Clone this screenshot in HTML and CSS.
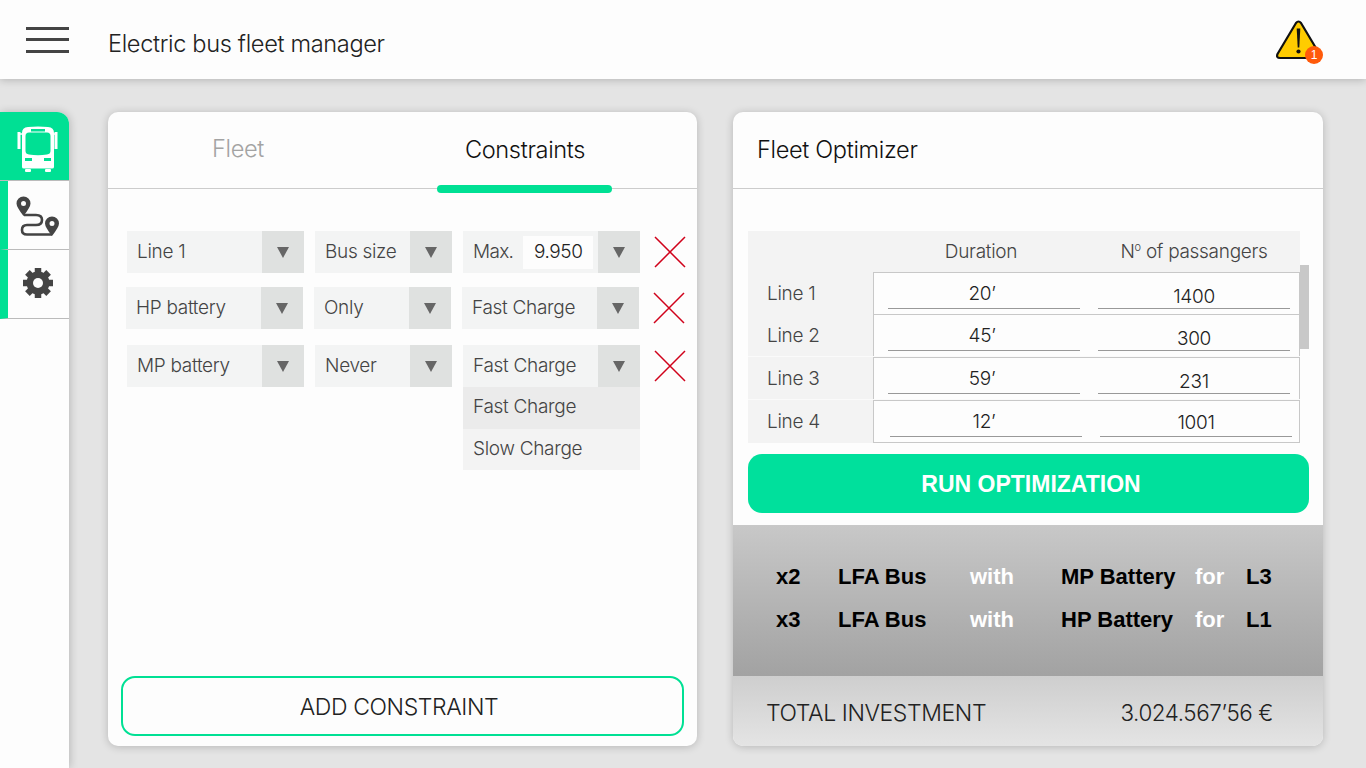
FILE: index.html
```html
<!DOCTYPE html>
<html lang="en">
<head>
<meta charset="utf-8">
<title>Electric bus fleet manager</title>
<link rel="stylesheet" href="styles.css">
</head>
<body>
<header class="topbar">
  <button class="burger" aria-label="Menu"><span></span><span></span><span></span></button>
  <h1 class="app-title">Electric bus fleet manager</h1>
  <div class="alert">
    <svg class="alert-icon" width="46" height="40" viewBox="0 0 46 40">
      <path d="M20 3 Q22.500 0 25 3 L43.500 34 Q45 38 41 38 H4 Q0 38 1.500 34 Z" fill="#ffcc00" stroke="#111" stroke-width="2.200" stroke-linejoin="round"/>
      <path d="M20.700 8.500 h3.600 l-1 19 h-1.600 Z" fill="#111"/>
      <circle cx="22.500" cy="31.500" r="2.100" fill="#111"/>
    </svg>
    <span class="alert-badge">1</span>
  </div>
</header>

<main class="main">
  <nav class="sidebar">
    <a class="side-item side-active">
      <svg width="42" height="46" viewBox="0 0 42 46">
        <rect x="0.500" y="6" width="3" height="17" fill="#fff"/>
        <rect x="37.500" y="6" width="3" height="17" fill="#fff"/>
        <path d="M3 8 H6 M35 8 H38" stroke="#fff" stroke-width="1.400"/>
        <path d="M5 7 Q5 1.500 11 1 Q21 0 31 1 Q37 1.500 37 7 V41 Q37 42.500 35 42.500 H7 Q5 42.500 5 41 Z" fill="#fff"/>
        <rect x="8" y="43" width="6" height="3" rx="1" fill="#fff"/>
        <rect x="28" y="43" width="6" height="3" rx="1" fill="#fff"/>
        <rect x="14" y="3" width="14" height="2.500" fill="#00e094"/>
        <path d="M8.500 10 Q8.500 6.500 12 6.500 H30 Q33.500 6.500 33.500 10 V25 Q33.500 28 30 28.500 Q21 30 12 28.500 Q8.500 28 8.500 25 Z" fill="#00e094"/>
        <rect x="8" y="32" width="7" height="3" fill="#00e094"/>
        <rect x="27" y="32" width="7" height="3" fill="#00e094"/>
      </svg>
    </a>
    <a class="side-item">
      <svg width="44" height="42" viewBox="0 0 44 42">
        <path d="M8 19 H20 Q26 19 26 24 Q26 29 20 29 H11 Q6 29 6 34 Q6 38.500 11 38.500 H36" fill="none" stroke="#444" stroke-width="2.600"/>
        <path fill-rule="evenodd" d="M7.500 0.500 A7 7 0 0 1 14.500 7.500 Q14.500 11 7.500 20 Q0.500 11 0.500 7.500 A7 7 0 0 1 7.500 0.500 Z M7.500 5 A2.500 2.500 0 1 0 7.500 10 A2.500 2.500 0 1 0 7.500 5 Z" fill="#444"/>
        <path fill-rule="evenodd" d="M36 20.500 A7 7 0 0 1 43 27.500 Q43 31 36 40 Q29 31 29 27.500 A7 7 0 0 1 36 20.500 Z M36 25 A2.500 2.500 0 1 0 36 30 A2.500 2.500 0 1 0 36 25 Z" fill="#444"/>
      </svg>
    </a>
    <a class="side-item">
      <svg width="32" height="32" viewBox="0 0 32 32">
        <g stroke="#444" stroke-width="6.500">
          <path d="M16 1 V31"/><path d="M1 16 H31"/><path d="M5.400 5.400 L26.600 26.600"/><path d="M26.600 5.400 L5.400 26.600"/>
        </g>
        <circle cx="16" cy="16" r="11.500" fill="#444"/>
        <circle cx="16" cy="16" r="5" fill="#fdfdfd"/>
      </svg>
    </a>
  </nav>

  <section class="card card-left">
    <div class="tabs">
      <div class="tab tab-fleet">Fleet</div>
      <div class="tab tab-constraints">Constraints</div>
    </div>
    <div class="constraints">
      <div class="row">
        <div class="select w-lg"><span class="select-text">Line 1</span><span class="arrow"></span></div>
        <div class="select w-sm"><span class="select-text">Bus size</span><span class="arrow"></span></div>
        <div class="select w-lg"><span class="select-text select-max">Max.</span><span class="max-value">9.950</span><span class="arrow"></span></div>
        <svg class="remove" width="32" height="32" viewBox="0 0 32 32"><path d="M1 1 L31 31 M31 1 L1 31" stroke="#d0021b" stroke-width="1.500"/></svg>
      </div>
      <div class="row row-second">
        <div class="select w-lg"><span class="select-text">HP battery</span><span class="arrow"></span></div>
        <div class="select w-sm"><span class="select-text">Only</span><span class="arrow"></span></div>
        <div class="select w-lg"><span class="select-text">Fast Charge</span><span class="arrow"></span></div>
        <svg class="remove" width="32" height="32" viewBox="0 0 32 32"><path d="M1 1 L31 31 M31 1 L1 31" stroke="#d0021b" stroke-width="1.500"/></svg>
      </div>
      <div class="row row-third">
        <div class="select w-lg"><span class="select-text">MP battery</span><span class="arrow"></span></div>
        <div class="select w-sm"><span class="select-text">Never</span><span class="arrow"></span></div>
        <div class="select w-lg select-open"><span class="select-text">Fast Charge</span><span class="arrow"></span>
          <ul class="menu">
            <li class="menu-item menu-item-hover">Fast Charge</li>
            <li class="menu-item">Slow Charge</li>
          </ul>
        </div>
        <svg class="remove" width="32" height="32" viewBox="0 0 32 32"><path d="M1 1 L31 31 M31 1 L1 31" stroke="#d0021b" stroke-width="1.500"/></svg>
      </div>
    </div>
    <button class="add-btn">ADD CONSTRAINT</button>
  </section>

  <section class="card card-right">
    <div class="card-head">Fleet Optimizer</div>
    <div class="table">
      <div class="t-head"><span class="col-a">Duration</span><span class="col-b">N<sup>o</sup> of passangers</span></div>
      <div class="t-row"><span class="t-label">Line 1</span><div class="t-cells"><span class="val val-dur">20’</span><span class="val">1400</span></div></div>
      <div class="t-row"><span class="t-label">Line 2</span><div class="t-cells"><span class="val val-dur">45’</span><span class="val">300</span></div></div>
      <div class="t-row t-row-sep"><span class="t-label">Line 3</span><div class="t-cells"><span class="val val-dur">59’</span><span class="val">231</span></div></div>
      <div class="t-row t-row-sep t-row-last"><span class="t-label">Line 4</span><div class="t-cells"><span class="val val-dur">12’</span><span class="val">1001</span></div></div>
      <div class="scrollbar"></div>
    </div>
    <button class="run-btn">RUN OPTIMIZATION</button>
    <div class="results">
      <b>x2</b><b>LFA Bus</b><i>with</i><b>MP Battery</b><i>for</i><b>L3</b>
      <b>x3</b><b>LFA Bus</b><i>with</i><b>HP Battery</b><i>for</i><b>L1</b>
    </div>
    <div class="total"><span>TOTAL INVESTMENT</span><span class="total-value">3.024.567’56 €</span></div>
  </section>
</main>
</body>
</html>
```
FILE: styles.css
```css
* { box-sizing: border-box; }
html, body { margin: 0; height: 100%; }
body {
  width: 1366px;
  height: 768px;
  overflow: hidden;
  background: #e4e4e4;
  color: #333;
  font-family: Inter, "Liberation Sans", sans-serif;
  font-weight: 300;
  display: flex;
  flex-direction: column;
}

.topbar {
  height: 79px;
  flex: none;
  background: #fdfdfd;
  box-shadow: 0 1px 8px rgba(0,0,0,.22);
  display: flex;
  align-items: center;
  position: relative;
  z-index: 2;
}
.burger {
  margin-left: 26px;
  width: 43px;
  height: 26px;
  padding: 0;
  border: 0;
  background: none;
  display: flex;
  flex-direction: column;
  justify-content: space-between;
}
.burger span { display: block; height: 3px; background: #444; }
.app-title {
  margin: 8px 0 0 39px;
  font-size: 23.6px;
  font-weight: 300;
  letter-spacing: -0.35px;
  color: #222;
  flex: 1;
}
.alert { position: relative; width: 46px; height: 40px; margin-right: 44px; margin-top: 1px; }
.alert-icon { display: block; }
.alert-badge {
  position: absolute;
  left: 29px;
  top: 26px;
  width: 18px;
  height: 18px;
  border-radius: 50%;
  background: #ff5a0a;
  color: #fff;
  font: 12px/18px "Liberation Sans", sans-serif;
  text-align: center;
}

.main {
  flex: 1;
  display: flex;
  padding-top: 33px;
  min-height: 0;
}
.sidebar {
  width: 69px;
  flex: none;
  margin-right: 39px;
  background: #fdfdfd;
  border-top-right-radius: 12px;
  box-shadow: 1px 0 8px rgba(0,0,0,.2);
}
.side-item {
  display: flex;
  align-items: center;
  justify-content: center;
  height: 69px;
  background: #fdfdfd;
  border-left: 8px solid #00e094;
  border-bottom: 1px solid #bbb;
}
.side-active {
  background: #00e094;
  border-left: 0;
  border-top-right-radius: 12px;
  height: 69px;
}
.side-item svg { display: block; }
.side-item:nth-child(1) svg { margin-left: 6px; margin-top: 6px; }
.side-item:nth-child(2) svg { margin-left: -1px; margin-top: 3px; }
.side-item:nth-child(3) svg { margin-left: -2px; margin-top: -2px; }

.card {
  background: #fdfdfd;
  border-radius: 10px;
  height: 634px;
  box-shadow: 0 1px 8px rgba(0,0,0,.2);
  display: flex;
  flex-direction: column;
}
.card-left { width: 589px; margin-right: 36px; }
.card-right { width: 590px; overflow: hidden; }

.tabs {
  height: 77px;
  flex: none;
  display: grid;
  grid-template-columns: 260px 314px;
  border-bottom: 1px solid #ccc;
  font-size: 23.6px;
  letter-spacing: -0.35px;
}
.tab { text-align: center; padding-top: 23px; position: relative; }
.tab-fleet { color: #a3a3a3; padding-top: 22px; }
.tab-constraints { color: #111; font-weight: 300; }
.tab-constraints::after {
  content: "";
  position: absolute;
  left: 69px;
  top: 73px;
  width: 175px;
  height: 8px;
  border-radius: 4px;
  background: #00e094;
}

.constraints { padding: 42px 0 0 19px; flex: 1; font-size: 19px; }
.row { display: flex; align-items: flex-start; gap: 11px; }
.row-second { margin: 14px 0 0 -1px; }
.row-third { margin-top: 16px; }
.select {
  height: 42px;
  background: #f3f4f4;
  display: flex;
  align-items: center;
  position: relative;
  color: #444;
}
.w-lg { width: 177px; }
.w-sm { width: 137px; }
.select-text { flex: 1; padding: 0 0 2px 10px; letter-spacing: -0.3px; white-space: nowrap; }
.select-max { flex: none; letter-spacing: -0.7px; }
.max-value {
  width: 70px;
  height: 33px;
  margin-left: 10px;
  background: #fdfdfd;
  color: #222;
  text-align: center;
  line-height: 31px;
  letter-spacing: -0.4px;
}
.arrow {
  margin-left: auto;
  width: 42px;
  height: 42px;
  flex: none;
  background: #dfe1e0;
  position: relative;
}
.select-text + .arrow { margin-left: 0; }
.arrow::after {
  content: "";
  position: absolute;
  left: 15px;
  top: 16px;
  border-left: 6px solid transparent;
  border-right: 6px solid transparent;
  border-top: 11px solid #666;
}
.remove { margin: 5px 0 0 3px; flex: none; }
.menu {
  position: absolute;
  left: 0;
  top: 42px;
  width: 177px;
  margin: 0;
  padding: 0;
  list-style: none;
}
.menu-item { height: 41px; line-height: 40px; padding-left: 10px; background: #f3f3f3; letter-spacing: -0.3px; }
.menu-item-hover { background: #ebebeb; height: 42px; }

.add-btn {
  height: 60px;
  margin: 0 13px 10px;
  flex: none;
  padding: 2px 7px 0 0;
  background: transparent;
  border: 2px solid #00e094;
  border-radius: 14px;
  font: inherit;
  font-size: 23px;
  letter-spacing: -0.4px;
  color: #222;
}

.card-head {
  height: 77px;
  flex: none;
  padding: 23px 0 0 24px;
  border-bottom: 1px solid #ccc;
  font-size: 23.6px;
  letter-spacing: -0.35px;
  color: #111;
}
.table {
  margin: 42px 0 0 15px;
  width: 552px;
  position: relative;
  background: #f3f3f3;
  font-size: 19px;
  color: #444;
}
.t-head {
  height: 41px;
  display: flex;
  align-items: center;
  letter-spacing: -0.3px;
}
.col-a { width: 140px; margin-left: 163px; text-align: center; }
.col-b { width: 212px; margin-left: 37px; text-align: center; }
.col-b sup { font-size: 11px; line-height: 0; }
.t-row { height: 42px; display: flex; }
.t-row-sep { height: 43px; border-top: 1px solid #fafafa; }
.t-row-last { height: 44px; }
.t-label { width: 125px; padding: 10px 0 0 19px; letter-spacing: -0.3px; }
.t-cells {
  flex: 1;
  display: flex;
  gap: 18px;
  padding: 0 9px 5px 14px;
  background: #fdfdfd;
  border: 1px solid #c8c8c8;
  border-bottom: 0;
}
.t-row-last .t-cells { padding: 0 7px 5px 16px; border-bottom: 1px solid #c8c8c8; }
.val {
  width: 192px;
  border-bottom: 1px solid #999;
  text-align: center;
  color: #222;
  letter-spacing: -0.3px;
  align-self: stretch;
  padding-top: 12px;
  line-height: 24px;
}
.val-dur { padding: 9px 4px 0 0; }
.t-row-last .val { padding-top: 10px; }
.t-row-last .val-dur { padding-top: 9px; }
.scrollbar {
  position: absolute;
  left: 552px;
  top: 34px;
  width: 9px;
  height: 84px;
  background: #c8c8c8;
}

.run-btn {
  height: 59px;
  margin: 11px 14px 12px 15px;
  flex: none;
  padding: 1px 0 0 5px;
  border: 0;
  border-radius: 14px;
  background: #00e09c;
  color: #fff;
  font: bold 23px "Liberation Sans", sans-serif;
}
.results {
  height: 151px;
  flex: none;
  background: linear-gradient(#c8c8c8, #a2a2a2);
  display: grid;
  grid-template-columns: 62px 132px 91px 134px 51px auto;
  grid-auto-rows: 43px;
  align-items: center;
  align-content: start;
  padding: 30px 0 0 43px;
  font: bold 22px "Liberation Sans", sans-serif;
  color: #000;
}
.results i { font-style: normal; color: #fff; }
.total {
  height: 70px;
  flex: none;
  background: linear-gradient(#cecece, #e4e4e4);
  display: flex;
  justify-content: space-between;
  align-items: center;
  padding: 3px 50px 0 33px;
  font-size: 23px;
  letter-spacing: -0.4px;
  color: #222;
}
.total-value { font-size: 22.4px; }
```
